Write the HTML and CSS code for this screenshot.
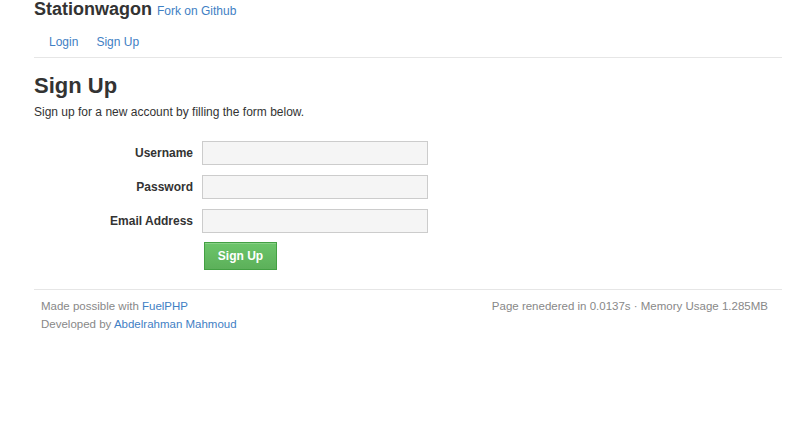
FILE: index.html
```html
<!DOCTYPE html>
<html>
<head>
    <title>Stationwagon</title>
    <link rel="stylesheet" href="styles.css">
</head>
<body>
    <div class="container">
        <div class="topbar">
            <h1>Stationwagon <a href="#" class="fork">Fork on Github</a></h1>
            <ul class="nav">
                <li><a href="#">Login</a></li>
                <li><a href="#">Sign Up</a></li>
            </ul>
        </div>

        <h2>Sign Up</h2>
        <p class="intro">Sign up for a new account by filling the form below.</p>

        <form class="signup_form">
            <label for="username">Username</label>
            <input type="text" id="username">

            <label for="password">Password</label>
            <input type="password" id="password">

            <label for="email">Email Address</label>
            <input type="text" id="email">

            <div class="actions">
                <button type="submit" class="btn_success">Sign Up</button>
            </div>
        </form>

        <div class="footer">
            <div class="footer_left">
                Made possible with <a href="#">FuelPHP</a><br>
                Developed by <a href="#">Abdelrahman Mahmoud</a>
            </div>
            <div class="footer_right">
                Page renedered in 0.0137s &middot; Memory Usage 1.285MB
            </div>
        </div>
    </div>
</body>
</html>
```

FILE: styles.css
```css
body {
    margin: 0;
    font-family: "Liberation Sans", Arial, sans-serif;
    font-size: 12px;
    color: #333;
    background: #fff;
}
a {
    color: #3f80c4;
    text-decoration: none;
}
.container {
    width: 748px;
    margin-left: 34px;
}
.topbar h1 {
    margin: -1px 0 0 0;
    font-size: 18px;
    line-height: 20px;
    font-weight: bold;
    color: #333;
}
.fork {
    font-size: 12px;
    font-weight: normal;
}
.nav {
    list-style: none;
    margin: 12px 0 0 0;
    padding: 0 0 6px 6px;
    display: flex;
    border-bottom: 1px solid #e6e6e6;
}
.nav li a {
    display: block;
    padding: 0 9px;
    line-height: 18px;
}
h2 {
    margin: 13px 0 0 0;
    font-size: 22px;
    line-height: 30px;
    font-weight: bold;
}
.intro {
    margin: 2px 0 0 0;
    line-height: 18px;
}
.signup_form {
    display: grid;
    grid-template-columns: 159px 226px;
    column-gap: 9px;
    row-gap: 10px;
    margin-top: 20px;
    align-items: center;
}
.signup_form label {
    text-align: right;
    font-weight: bold;
}
.signup_form input {
    box-sizing: border-box;
    height: 24px;
    width: 226px;
    margin: 0;
    border: 1px solid #ccc;
    background: #f5f5f5;
    font-family: inherit;
    font-size: 12px;
}
.actions {
    grid-column: 2;
    padding-left: 2px;
    margin-top: -1px;
}
.btn_success {
    height: 28px;
    width: 73px;
    border: 1px solid #43a043;
    background: linear-gradient(#6cc56a, #5cb05a);
    color: #fff;
    font-family: inherit;
    font-size: 12px;
    font-weight: bold;
    padding: 0;
    box-shadow: inset 0 1px 0 rgba(255, 255, 255, 0.2);
}
.footer {
    margin-top: 19px;
    border-top: 1px solid #e6e6e6;
    padding: 7px 14px 0 7px;
    display: flex;
    justify-content: space-between;
    font-size: 11.5px;
    line-height: 18px;
    color: #888;
}
```
